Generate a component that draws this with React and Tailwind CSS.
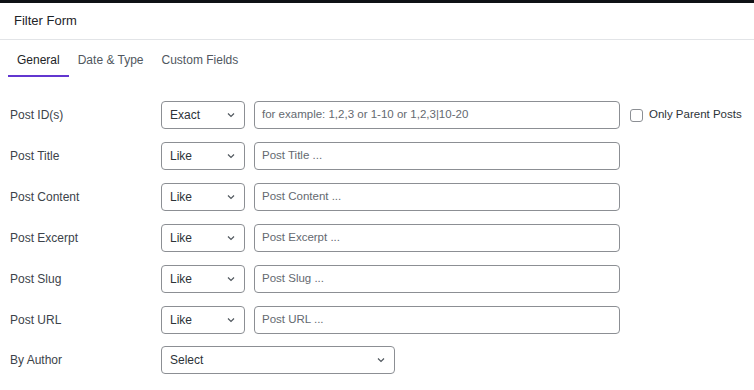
import { useState } from 'react';

const rows = [
  { label: 'Post ID(s)', mode: 'Exact', placeholder: 'for example: 1,2,3 or 1-10 or 1,2,3|10-20', parent: true },
  { label: 'Post Title', mode: 'Like', placeholder: 'Post Title ...' },
  { label: 'Post Content', mode: 'Like', placeholder: 'Post Content ...' },
  { label: 'Post Excerpt', mode: 'Like', placeholder: 'Post Excerpt ...' },
  { label: 'Post Slug', mode: 'Like', placeholder: 'Post Slug ...' },
  { label: 'Post URL', mode: 'Like', placeholder: 'Post URL ...' },
];

const tabs = ['General', 'Date & Type', 'Custom Fields'];

function Chevron() {
  return (
    <svg className="h-[10px] w-[10px] text-[#50575e]" viewBox="0 0 10 10" fill="none" stroke="currentColor" strokeWidth="1.2">
      <path d="M2 3.5l3 3 3-3" />
    </svg>
  );
}

function SelectBox({ value, width }) {
  return (
    <div className={`flex h-[28px] ${width} items-center justify-between rounded-[4px] border border-[#8c8f94] bg-white pl-[8px] pr-[8px] text-[12px] text-[#2c3338]`}>
      <span>{value}</span>
      <Chevron />
    </div>
  );
}

export default function App() {
  const [active, setActive] = useState(0);

  return (
    <div className="h-[390px] w-[754px] overflow-hidden bg-white" style={{ fontFamily: '"Liberation Sans", Arial, sans-serif' }}>
      {/* top dark strip */}
      <div className="h-[3px] bg-[#0f1115]"></div>

      {/* header */}
      <div className="flex h-[37px] items-center border-b border-[#e2e4e7] px-[14px] text-[13px] text-[#1d2327]">
        Filter Form
      </div>

      {/* tabs */}
      <div className="flex px-[8px] pt-[11px]">
        {tabs.map((tab, i) => (
          <button
            key={tab}
            onClick={() => setActive(i)}
            className={`border-b-2 px-[9px] pb-[6px] text-[12px] ${i === active ? 'border-[#6236d0] text-[#1d2327]' : 'border-transparent text-[#50575e]'}`}
          >
            {tab}
          </button>
        ))}
      </div>

      {/* form rows */}
      <div className="flex flex-col gap-[13px] pl-[10px] pt-[24px]">
        {rows.map((row) => (
          <div key={row.label} className="flex items-center">
            <div className="w-[151px] text-[12px] text-[#3c434a]">{row.label}</div>
            <SelectBox value={row.mode} width="w-[84px]" />
            <div className="ml-[9px] flex h-[28px] w-[366px] items-center rounded-[4px] border border-[#8c8f94] px-[7px] text-[11.5px] text-[#646970]">
              {row.placeholder}
            </div>
            {row.parent && (
              <label className="ml-[10px] flex items-center gap-[6px] text-[11.5px] text-[#2c3338]">
                <span className="h-[13px] w-[13px] rounded-[3px] border border-[#8c8f94] bg-white"></span>
                Only Parent Posts
              </label>
            )}
          </div>
        ))}
        <div className="-mt-px flex items-center">
          <div className="w-[151px] text-[12px] text-[#3c434a]">By Author</div>
          <SelectBox value="Select" width="w-[234px]" />
        </div>
      </div>
    </div>
  );
}
